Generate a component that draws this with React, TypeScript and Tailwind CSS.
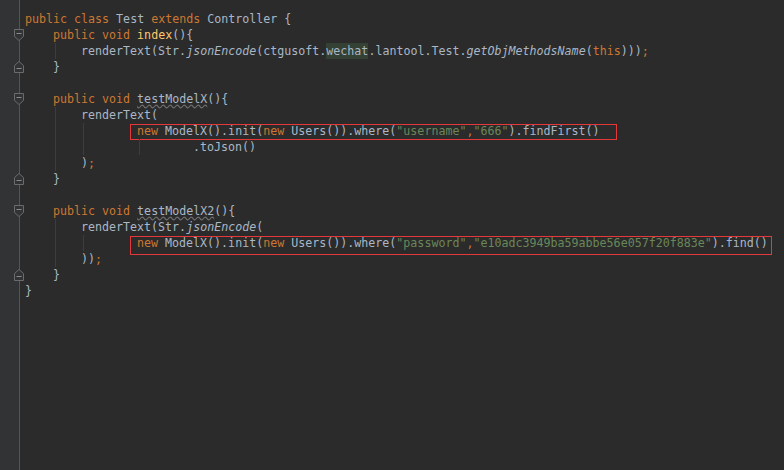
type Kind = 'd' | 'k' | 'm' | 's' | 'i' | 'h' | 'u';
type Tok = [string, Kind];
type Line = { indent?: boolean[]; toks: Tok[]; fold?: 'open' | 'close'; box?: 'a' | 'b' };

const tone: Record<Kind, string> = {
  d: 'text-[#a9b7c6]',
  k: 'text-[#cc7832]',
  m: 'text-[#ffc66d]',
  s: 'text-[#6a8759]',
  i: 'text-[#a9b7c6] italic',
  h: 'text-[#a9b7c6] bg-[#344134]',
  u: 'text-[#a9b7c6] underline decoration-wavy decoration-[#6f6f6f] underline-offset-[1px]',
};

const lines: Line[] = [
  { toks: [['public class ', 'k'], ['Test ', 'd'], ['extends ', 'k'], ['Controller {', 'd']] },
  { indent: [false], fold: 'open', toks: [['public void ', 'k'], ['index', 'm'], ['(){', 'd']] },
  {
    indent: [false, true],
    toks: [
      ['renderText(Str.', 'd'],
      ['jsonEncode', 'i'],
      ['(ctgusoft.', 'd'],
      ['wechat', 'h'],
      ['.lantool.Test.', 'd'],
      ['getObjMethodsName', 'i'],
      ['(', 'd'],
      ['this', 'k'],
      [')))', 'd'],
      [';', 'k'],
    ],
  },
  { indent: [false], fold: 'close', toks: [['}', 'd']] },
  { toks: [] },
  { indent: [false], fold: 'open', toks: [['public void ', 'k'], ['testModelX', 'u'], ['(){', 'd']] },
  { indent: [false, true], toks: [['renderText(', 'd']] },
  {
    indent: [false, true, true, false],
    box: 'a',
    toks: [
      ['new ', 'k'],
      ['ModelX().init(', 'd'],
      ['new ', 'k'],
      ['Users()).where(', 'd'],
      ['"username"', 's'],
      [',', 'k'],
      ['"666"', 's'],
      [').findFirst()', 'd'],
    ],
  },
  { indent: [false, true, true, false, true, false], toks: [['.toJson()', 'd']] },
  { indent: [false, true], toks: [[')', 'd'], [';', 'k']] },
  { indent: [false], fold: 'close', toks: [['}', 'd']] },
  { toks: [] },
  { indent: [false], fold: 'open', toks: [['public void ', 'k'], ['testModelX2', 'u'], ['(){', 'd']] },
  { indent: [false, true], toks: [['renderText(Str.', 'd'], ['jsonEncode', 'i'], ['(', 'd']] },
  {
    indent: [false, true, true, false],
    box: 'b',
    toks: [
      ['new ', 'k'],
      ['ModelX().init(', 'd'],
      ['new ', 'k'],
      ['Users()).where(', 'd'],
      ['"password"', 's'],
      [',', 'k'],
      ['"e10adc3949ba59abbe56e057f20f883e"', 's'],
      [').find()', 'd'],
    ],
  },
  { indent: [false, true], toks: [['))', 'd'], [';', 'k']] },
  { indent: [false], fold: 'close', toks: [['}', 'd']] },
  { toks: [['}', 'd']] },
];

function FoldMark({ kind }: { kind: 'open' | 'close' }) {
  return (
    <svg width="11" height="12" viewBox="0 0 11 12" className="absolute left-[14px] top-[2px]">
      {kind === 'open' ? (
        <>
          <path d="M0.5 0.5H9.5V7.5L5 11.5L0.5 7.5Z" fill="#313335" stroke="#6b6b6b" />
          <path d="M2.5 4.5H7.5" stroke="#8a8a8a" />
        </>
      ) : (
        <>
          <path d="M0.5 11.5H9.5V4.5L5 0.5L0.5 4.5Z" fill="#313335" stroke="#6b6b6b" />
          <path d="M2.5 7.5H7.5" stroke="#8a8a8a" />
        </>
      )}
    </svg>
  );
}

export default function App() {
  return (
    <div
      className="flex h-[470px] w-[784px] overflow-hidden bg-[#2b2b2b] text-[11.65px] leading-4"
      style={{ fontFamily: '"DejaVu Sans Mono", "Liberation Mono", monospace' }}
    >
      {/* Gutter */}
      <div className="w-[20px] shrink-0 border-r border-[#555555] bg-[#313335] pt-[11px]">
        {lines.map((line, i) => (
          <div key={i} className="relative h-4">
            {line.fold && <FoldMark kind={line.fold} />}
          </div>
        ))}
      </div>

      {/* Code */}
      <div className="flex-1 pl-[5px] pt-[11px]">
        {lines.map((line, i) => (
          <div key={i} className="relative flex h-4 whitespace-pre">
            {(line.indent ?? []).map((guide, j) => (
              <span key={j} className="inline-block h-4 w-[28px] shrink-0">
                {guide && <span className="ml-[2px] block h-full border-l border-[#3d3d3d]" />}
              </span>
            ))}
            {line.toks.map(([text, kind], j) => (
              <span key={j} className={tone[kind]}>
                {text}
              </span>
            ))}
            {line.box === 'a' && (
              <div className="absolute left-[105px] top-px h-4 w-[487px] border border-[#e5383b]" />
            )}
            {line.box === 'b' && (
              <div className="absolute left-[105px] top-px h-[19px] w-[642px] border border-[#e5383b]" />
            )}
          </div>
        ))}
      </div>
    </div>
  );
}
